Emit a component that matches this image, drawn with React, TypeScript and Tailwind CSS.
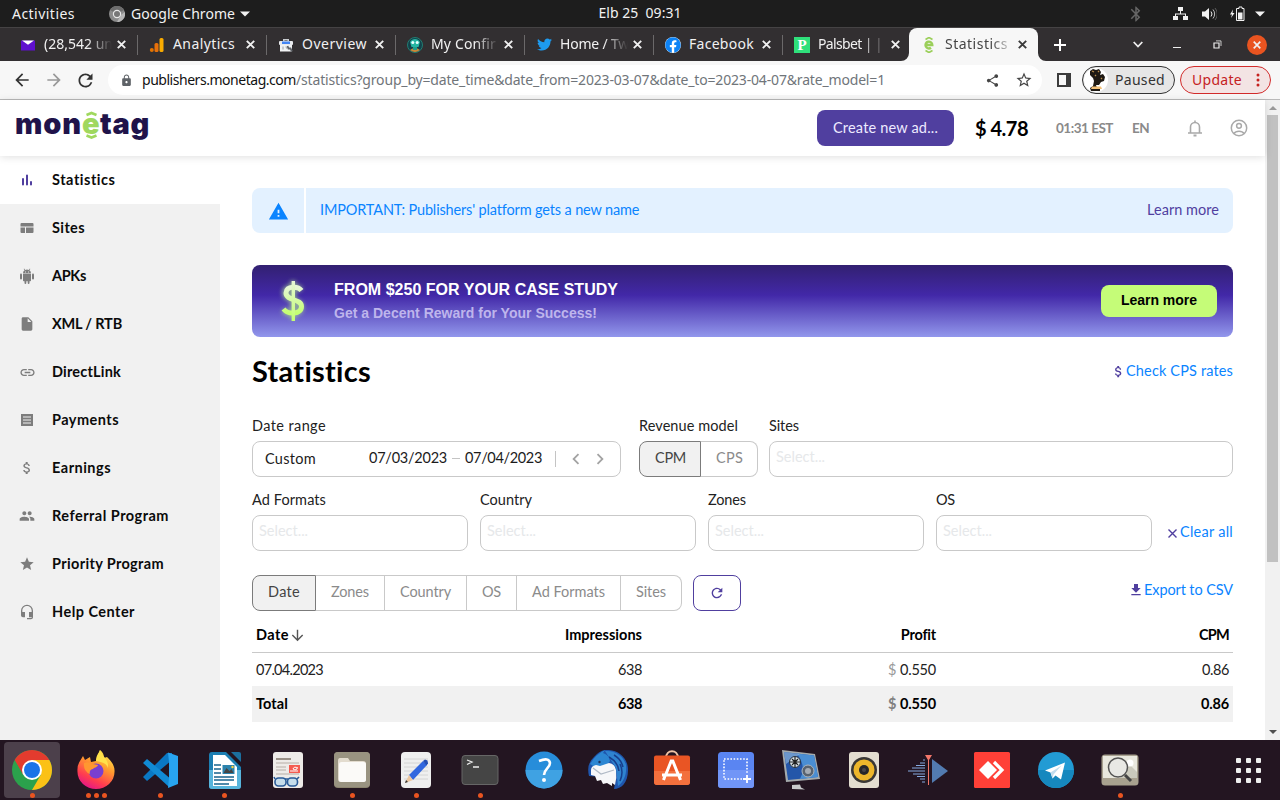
import { useLayoutEffect, useRef, type ReactNode } from "react";
import {
  MdArrowBack, MdArrowForward, MdRefresh, MdLock, MdShare, MdStarBorder, MdInsertDriveFile, MdLink,
  MdAttachMoney, MdPeople, MdStar, MdHeadsetMic, MdWarning, MdChevronLeft, MdChevronRight, MdBluetooth,
  MdArrowDownward, MdDownload,
} from "react-icons/md";
import { FaTwitter, FaFacebook } from "react-icons/fa";

const UI = "font-['Noto_Sans','Open_Sans',sans-serif]";
const BODY = "font-[Lato,'Open_Sans',sans-serif]";

/* Text run tracked so that it fills the given width. */
function T({ w, className = "", children }: { w: number; className?: string; children: string }) {
  const ref = useRef<HTMLSpanElement>(null);
  useLayoutEffect(() => {
    const el = ref.current;
    if (!el) return;
    el.style.letterSpacing = "0px";
    const natural = el.getBoundingClientRect().width;
    el.style.letterSpacing = `${(w - natural) / children.length}px`;
  }, [w, children]);
  return <span ref={ref} className={`inline-block shrink-0 whitespace-pre ${className}`}>{children}</span>;
}

function TopBar() {
  return (
    <div className={`grid h-7 shrink-0 grid-cols-3 items-center border-b border-[#454344] bg-[#1d1d1d] text-[14px] leading-5 text-[#f2f2f2] ${UI}`}>
      <div className="flex items-center pl-3">
        <T w={63}>Activities</T>
        <svg className="ml-[34px]" width="16" height="16" viewBox="0 0 16 16">
          <circle cx="8" cy="8" r="8" fill="#8b8b8b" />
          <path d="M8 8 1 4a8 8 0 0 1 14 0z" fill="#6d6d6d" />
          <path d="M8 16 12 9 15.8 6A8 8 0 0 1 8 16z" fill="#b5b5b5" />
          <circle cx="8" cy="8" r="4.2" fill="#e8e8e8" />
          <circle cx="8" cy="8" r="3" fill="#777" />
        </svg>
        <T w={104} className="ml-1.5">Google Chrome</T>
        <svg className="ml-[5px]" width="10" height="6" viewBox="0 0 10 6"><path d="M0 .5h10L5 5.5z" fill="#f2f2f2" /></svg>
      </div>
      <div className="flex justify-center pb-px"><T w={83}>{"Elb 25  09:31"}</T></div>
      <div className="flex items-center justify-end pr-[15px]">
        <MdBluetooth size={18} className="mr-[28px] text-[#666]" />
        <svg width="15" height="14" viewBox="0 0 15 14" fill="#f2f2f2"><path d="M5 0h5v4H8v2.500h5V9h2v4h-5V9h2V7.500H3V9h2v4H0V9h2V6.500h5V4H5z" /></svg>
        <svg className="ml-[14px]" width="15" height="14" viewBox="0 0 15 14" fill="none" stroke="#f2f2f2">
          <path d="M0 4.500h3L7 1v12L3 9.500H0z" fill="#f2f2f2" stroke="none" /><path d="M9 4.500a4 4 0 0 1 0 5" /><path d="M11 2.500a7 7 0 0 1 0 9" opacity=".75" /><path d="M13 1a9 9 0 0 1 0 12" opacity=".3" />
        </svg>
        <svg className="ml-[13px]" width="15" height="16" viewBox="0 0 15 16"><path d="M3 3.500 0 8.500h2L1 12l3.500-5H2.500z" fill="#f2f2f2" /><path d="M9 1h3v1.500h2v12H6.500v-12H9z" fill="none" stroke="#f2f2f2" /><path d="M8 6.500h4.500v7H8z" fill="#f2f2f2" /></svg>
        <svg className="ml-[10px]" width="10" height="6" viewBox="0 0 10 6"><path d="M0 .5h10L5 5.500z" fill="#f2f2f2" /></svg>
      </div>
    </div>
  );
}

function X({ color = "#f1f1f1", size = 9 }: { color?: string; size?: number }) {
  return <svg width={size} height={size} viewBox="0 0 9 9" stroke={color} strokeWidth="1.9"><path d="M.8.8 8.200 8.200M8.200.8.8 8.200" /></svg>;
}

const MonetagIcon = (
  <svg width="16" height="16" viewBox="0 0 16 16" fill="none" stroke="#9bcf5a">
    <path d="m4.500 2.500 3.500-2 3.500 2M4.500 13.500l3.500 2 3.500-2" strokeWidth="1.700" />
    <path d="M4.800 8h6.500a3.400 3.400 0 1 0-1.300 2.700" strokeWidth="2.400" />
  </svg>
);

const tabs: { icon: ReactNode; text: string; w: number; fade?: boolean }[] = [
  { icon: <svg width="16" height="16" viewBox="0 0 16 16"><path d="M1 3.500h14v10H1z" fill="#5f10cf" /><path d="M2 3.500h12L8 7.800z" fill="#fff" /></svg>, text: "(28,542 un", w: 69, fade: true },
  { icon: <svg width="16" height="16" viewBox="0 0 16 16"><rect x="10.500" y="1" width="4" height="14" rx="1.500" fill="#f9ab00" /><rect x="5.500" y="6" width="4" height="9" rx="1.500" fill="#e8710a" /><circle cx="2.800" cy="13" r="2" fill="#e37400" /></svg>, text: "Analytics", w: 62 },
  { icon: <svg width="16" height="16" viewBox="0 0 16 16"><path d="M5 2h6v3H9.500V3.500h-3V5H5z" fill="#c8ccd0" /><rect x="1" y="4" width="14" height="4" rx="1" fill="#e8eaed" /><rect x="4" y="4.500" width="8" height="2.500" fill="#4285f4" /><path d="M2 8h12v6.500H2z" fill="#f1f3f4" /><path d="M5 9.500v3M8 9.500l.5 2" stroke="#9aa0a6" /><path d="m9.500 9 1 2.500h2l1.500 3" stroke="#5f6368" strokeWidth="1.800" fill="none" /></svg>, text: "Overview", w: 65 },
  { icon: <svg width="16" height="16" viewBox="0 0 16 16"><circle cx="8" cy="8" r="7.500" fill="#12414a" stroke="#227d72" /><path d="M3 5c2-4 8-4 10 0l-1.500 5h-7z" fill="#25b5a2" /><circle cx="5.800" cy="5.500" r="1.500" fill="#e7ffff" /><circle cx="10.200" cy="5.500" r="1.500" fill="#e7ffff" /><path d="M3 13q5-4 10 0-5 4-10 0" fill="#c9893a" /><path d="M6 10h4v3H6z" fill="#1f9d8a" /></svg>, text: "My Confir", w: 65, fade: true },
  { icon: <FaTwitter size={15} color="#1d9bf0" />, text: "Home / Tw", w: 69, fade: true },
  { icon: <span className="flex size-4 rounded-full bg-white"><FaFacebook size={16} color="#0d83f5" /></span>, text: "Facebook", w: 65 },
  { icon: <span className="flex size-4 items-center justify-center bg-[#2fe07b] font-['Liberation_Serif',serif] text-[15px] leading-4 font-bold text-white">P</span>, text: "Palsbet | |", w: 64, fade: true },
];

function TabStrip() {
  return (
    <div className={`flex h-[33px] shrink-0 bg-[#322f31] pl-[9px] text-[14px] leading-5 text-[#f1f1f1] ${UI}`}>
      {tabs.map((t, i) => (
        <div key={t.text} className={`flex w-[129px] items-center pl-[11px] ${i < 6 ? "bg-[linear-gradient(#6b696a,#6b696a)] bg-[length:1px_20px] bg-[position:128px_center] bg-no-repeat" : ""}`}>
          <span className="flex w-4 justify-center">{t.icon}</span>
          <div className={`ml-2 w-[70px] pb-px ${t.fade ? "[mask-image:linear-gradient(to_right,#000_44px,transparent_68px)]" : ""}`}><T w={t.w} className="align-top">{t.text}</T></div>
          <span className="ml-[3px] flex"><X /></span>
        </div>
      ))}
      <div className="relative -ml-[3px] flex w-[129px] items-center rounded-t-lg bg-[#f7f7f7] pl-[12px] text-[#454545]">
        <svg className="absolute bottom-0 -left-2" width="8" height="8" viewBox="0 0 8 8"><path d="M8 0v8H0a8 8 0 0 0 8-8" fill="#f7f7f7" /></svg>
        <svg className="absolute -right-2 bottom-0" width="8" height="8" viewBox="0 0 8 8"><path d="M0 0v8h8A8 8 0 0 1 0 0" fill="#f7f7f7" /></svg>
        {MonetagIcon}
        <div className="ml-2 w-[66px] pb-px [mask-image:linear-gradient(to_right,#000_46px,transparent_70px)]"><T w={63} className="align-top">Statistics</T></div>
        <span className="ml-[7px] flex"><X color="#3a3a3a" /></span>
      </div>
      <div className="flex grow items-center pl-4">
        <svg width="12" height="12" viewBox="0 0 12 12" stroke="#fff" strokeWidth="2"><path d="M6 0v12M0 6h12" /></svg>
        <svg className="ml-[67px]" width="10" height="7" viewBox="0 0 10 7" fill="none" stroke="#eee" strokeWidth="1.800"><path d="m.7 1 4.300 4.500L9.300 1" /></svg>
        <svg className="ml-[30px]" width="8" height="8" viewBox="0 0 8 8"><path d="M0 6h8v1H0z" fill="#eee" /></svg>
        <svg className="ml-8" width="9" height="9" viewBox="0 0 9 9" fill="none" stroke="#eee"><path d="M1 3h5v5H1z" strokeWidth="1.200" /><path d="M3 .9h5V6" strokeWidth=".8" /></svg>
        <span className="ml-[25px] flex size-5 items-center justify-center rounded-full bg-[#e95420]"><X size={8} /></span>
      </div>
    </div>
  );
}

function Toolbar() {
  return (
    <div className={`flex h-[39px] shrink-0 items-center border-b border-[#b9b9b9] bg-[#f7f7f7] text-[14px] leading-5 ${UI}`}>
      <MdArrowBack size={20} className="ml-3 text-[#333]" />
      <MdArrowForward size={20} className="ml-3 text-[#999]" />
      <MdRefresh size={21} className="ml-[11px] text-[#333]" />
      <div className="ml-3 flex h-[30px] w-[934px] items-center rounded-full bg-white pl-3">
        <MdLock size={13} className="text-[#5f6368]" />
        <T w={154} className="ml-[9px] text-[#111]">publishers.monetag.com</T>
        <T w={589} className="text-[#70757a]">/statistics?group_by=date_time&date_from=2023-03-07&date_to=2023-04-07&rate_model=1</T>
        <MdShare size={15} className="ml-[100px] text-[#454545]" />
        <MdStarBorder size={18} className="ml-[15px] text-[#454545]" />
      </div>
      <svg className="ml-[15px]" width="14" height="14" viewBox="0 0 14 14"><path d="M1 1h12v12H1z" fill="none" stroke="#3c3c3c" strokeWidth="2" /><path d="M9 1h4v12H9z" fill="#3c3c3c" /></svg>
      <div className="ml-[11px] flex h-7 w-[93px] items-center rounded-full border border-[#333] bg-[#e6e6e6] text-[#333]">
        <svg className="ml-px" width="24" height="24" viewBox="0 0 24 24"><circle cx="12" cy="12" r="12" fill="#fff" /><path d="m6 3 3-2 3 1 3-1 2 3-1 3 3-1 2 3-1 4-3 1-2 3h-3l1 3h3v3H7l-1-3 3-2 1-5-1-3-3-3z" fill="#1f1a14" /><path d="m8 3 2 1M14 3l1 1M11 7l1 1M17 10l1 1" stroke="#b88c4d" strokeWidth="1.300" fill="none" /><path d="M8 18.500h9l1 2.500H7z" fill="#f2c077" /></svg>
        <T w={50} className="ml-[7px]">Paused</T>
      </div>
      <div className="ml-[5px] flex h-7 w-[91px] items-center rounded-full border border-[#d22b2b] bg-[#f3e4e4] pl-[11px] text-[#c5221f]">
        <T w={50}>Update</T>
        <svg className="ml-[14px]" width="4" height="14" viewBox="0 0 4 14" fill="#c5221f"><circle cx="2" cy="2" r="1.500" /><circle cx="2" cy="7" r="1.500" /><circle cx="2" cy="12" r="1.500" /></svg>
      </div>
    </div>
  );
}

function SiteHeader() {
  return (
    <header className="relative z-10 flex h-14 shrink-0 bg-white pl-[15px] shadow-[0_1px_8px_rgba(0,0,0,0.13)]">
      <div className="relative mt-[2px] flex h-11 w-[136px] items-center font-[Inter,sans-serif] text-[29px] leading-[44px] font-black text-[#20134a]">
        <T w={67}>mon</T><T w={18} className="text-[#9fd85e]">e</T><T w={50}>tag</T>
        <svg className="absolute top-[9px] left-[69px]" width="15" height="28" viewBox="0 0 15 28" fill="none" stroke="#9fd85e" strokeWidth="2.600"><path d="M2.500 4 7.500 2l5 2M2.500 24.500l5 2 5-2" /></svg>
      </div>
      <div className="mt-[10px] ml-[666px] flex h-9 w-[137px] justify-center rounded-lg bg-[#503f9f] pt-[8px] text-[14.5px] leading-5 text-[#eeebff]"><T w={105}>Create new ad...</T></div>
      <T w={53} className="mt-4 ml-[21px] text-[20px] leading-6 font-bold text-black">$ 4.78</T>
      <T w={57} className="mt-[18px] ml-[28px] text-[13.5px] leading-5 font-bold text-[#8a8a8a]">01:31 EST</T>
      <T w={17} className="mt-[18px] ml-[19px] text-[13.5px] leading-5 font-bold text-[#8a8a8a]">EN</T>
      <svg className="mt-5 ml-[39px]" width="14" height="17" viewBox="0 0 14 17" fill="none" stroke="#a9a9a9" strokeWidth="1.600"><path d="M0 13h14M2.500 13V7a4.500 4.500 0 0 1 9 0v6M7 2.500V.5" /><path d="M5.500 15.500h3" strokeWidth="2" /></svg>
      <svg className="mt-[19px] ml-[28px]" width="18" height="18" viewBox="0 0 18 18" fill="none" stroke="#a9a9a9" strokeWidth="1.500"><circle cx="9" cy="9" r="7.700" /><circle cx="9" cy="6.800" r="2.400" /><path d="M4 14.500c1.800-3 8.200-3 10 0" /></svg>
    </header>
  );
}

const nav: { icon: ReactNode; text: string; w: number }[] = [
  { icon: <svg width="12" height="12" viewBox="0 0 12 12" stroke="#503f9f" strokeWidth="2" strokeLinecap="round"><path d="M2 5v5.500M6 1.500v9M10 8v2.500" /></svg>, text: "Statistics", w: 64 },
  { icon: <svg width="14" height="12" viewBox="0 0 14 12" fill="#7d7d7d"><path d="M1.500 1h11q1 0 1 1v2.500H.5V2q0-1 1-1M.5 5.500H5V11H1.500q-1 0-1-1zM6 5.500h7.500V10q0 1-1 1H6z" /></svg>, text: "Sites", w: 33 },
  { icon: <svg width="14" height="16" viewBox="0 0 14 16" fill="#7d7d7d"><path d="M3 6h8v6.500q0 .8-.8.800H9.500V15a.9.9 0 0 1-1.800 0v-1.700H6.300V15a.9.9 0 0 1-1.800 0v-1.700h-.7q-.8 0-.8-.8zM3 5.400A4 3.700 0 0 1 4.600 2.300L3.700 1l.4-.4 1.200 1.300a4.500 4.500 0 0 1 3.400 0L9.900.6l.4.4-.9 1.300A4 3.700 0 0 1 11 5.400z" /><rect y="5.600" width="2" height="6" rx="1" /><rect x="12" y="5.600" width="2" height="6" rx="1" /><path d="M5 3.600h.9v.8H5zM8.100 3.600H9v.8h-.9z" fill="#f1f1f1" /></svg>, text: "APKs", w: 34 },
  { icon: <MdInsertDriveFile size={16} />, text: "XML / RTB", w: 70 },
  { icon: <MdLink size={17} />, text: "DirectLink", w: 69 },
  { icon: <svg width="12" height="12" viewBox="0 0 12 12"><path d="M0 0h12v12H0z" fill="#7d7d7d" /><path d="M2 3h8M2 6h8M2 9h8" stroke="#f1f1f1" /></svg>, text: "Payments", w: 67 },
  { icon: <MdAttachMoney size={16} />, text: "Earnings", w: 59 },
  { icon: <MdPeople size={16} />, text: "Referral Program", w: 117 },
  { icon: <MdStar size={16} />, text: "Priority Program", w: 112 },
  { icon: <MdHeadsetMic size={16} />, text: "Help Center", w: 83 },
];

function Sidebar() {
  return (
    <nav className="w-[220px] shrink-0 bg-[#f1f1f1]">
      {nav.map((n, i) => (
        <div key={n.text} className={`flex h-12 items-center text-[14.5px] leading-5 font-bold text-[#0b0b0b] ${i === 0 ? "bg-white" : ""}`}>
          <span className="flex w-[54px] justify-center text-[#7d7d7d]">{n.icon}</span>
          <T w={n.w} className="-ml-0.5">{n.text}</T>
        </div>
      ))}
    </nav>
  );
}

function Field({ label, lw, className = "" }: { label: string; lw: number; className?: string }) {
  return (
    <div className={className}>
      <div className="h-[26px] pt-px"><T w={lw} className="text-[#222]">{label}</T></div>
      <div className="h-9 rounded-lg border border-[#c9c9c9] pt-[5px] pl-[6px] text-[#e6e8ea]"><T w={49}>Select...</T></div>
    </div>
  );
}

const groups: [string, number, string][] = [
  ["Zones", 38, "w-[69px]"], ["Country", 51, "w-[82px]"], ["OS", 19, "w-[50px]"], ["Ad Formats", 73, "w-[104px]"], ["Sites", 30, "w-[61px] rounded-r-lg"],
];

function Main() {
  return (
    <main className="w-[1045px] pt-8 pr-8 pl-8 text-[14.5px] leading-5">
      <div className="flex h-[45px] overflow-hidden rounded-lg bg-[#e3f1ff]">
        <div className="flex w-[54px] items-center justify-center border-r-2 border-white pt-0.5"><MdWarning size={21} className="text-[#0a84ff]" /></div>
        <div className="flex grow justify-between pt-[12px] pr-[14px] pl-[14px]">
          <T w={319} className="text-[#0a84ff]">IMPORTANT: Publishers' platform gets a new name</T>
          <T w={72} className="text-[#503f9f]">Learn more</T>
        </div>
      </div>
      <div className="mt-8 flex h-[72px] rounded-lg bg-[linear-gradient(#322071_0%,#4228a8_42%,#9297ec_100%)] font-['Liberation_Sans',Arial,sans-serif]">
        <svg className="mt-3 ml-6" width="34" height="50" viewBox="0 0 34 50">
          <defs><linearGradient id="cash" x1="0" y1="0" x2="0" y2="1"><stop offset="0" stopColor="#e6f7d5" /><stop offset="1" stopColor="#c4ff72" /></linearGradient></defs>
          <g className="blur-[2px]" fill="none" stroke="#a4cf91" strokeWidth="6" opacity=".8"><path d="M25 13C21 9 9 9 9 16s16 7 16 14-11 9-18 3M17 4v38" /></g>
          <path d="M25.500 13.500C22 9 10 8.500 10 16c0 8 15.500 5.500 15.500 13.500 0 8-13 8.500-18 2.500" fill="none" stroke="url(#cash)" strokeWidth="5" />
          <path d="M15.600 4h3.400v40h-3.400z" fill="url(#cash)" />
        </svg>
        <div className="ml-6 pt-[15px] font-bold">
          <div className="h-5"><T w={284} className="text-base leading-5 text-white">FROM $250 FOR YOUR CASE STUDY</T></div>
          <div className="mt-[3px]"><T w={263} className="text-[14px] leading-5 text-[#beb5ec]">Get a Decent Reward for Your Success!</T></div>
        </div>
        <div className="mt-5 mr-4 ml-auto flex h-8 w-[116px] justify-center rounded-lg bg-[#c5fc78] pt-[5px] text-[14px] font-bold text-black"><T w={76}>Learn more</T></div>
      </div>
      <div className="flex h-[78px] justify-between pt-[16px]">
        <T w={120} className="text-[29px] leading-9 font-bold text-black">Statistics</T>
        <div className="flex pt-2 text-[#0a84ff]"><MdAttachMoney size={15} className="mt-[3px] text-[#503f9f]" /><T w={107}>Check CPS rates</T></div>
      </div>
      <div className="flex">
        <div className="w-[369px]">
          <div className="h-[26px] pt-px"><T w={74} className="text-[#222]">Date range</T></div>
          <div className="flex h-9 items-center rounded-lg border border-[#c9c9c9] pl-3 text-[#1b1b1b]">
            <T w={51} className="pb-px">Custom</T>
            <T w={78} className="ml-[53px] pb-[3px]">07/03/2023</T>
            <span className="mx-[5px] mb-0.5 h-px w-2 bg-[#c4c4c4]" />
            <T w={77} className="pb-[3px]">07/04/2023</T>
            <span className="ml-[13px] h-4 w-px bg-[#c4c4c4]" />
            <MdChevronLeft size={22} className="ml-[9px] text-[#a3a3a3]" />
            <MdChevronRight size={22} className="ml-[2px] text-[#a3a3a3]" />
          </div>
        </div>
        <div className="ml-[18px] w-[119px]">
          <div className="h-[26px] pt-px"><T w={99} className="text-[#222]">Revenue model</T></div>
          <div className="flex h-9">
            <div className="w-[62px] rounded-l-lg border border-[#7b7b7b] bg-[#f1f1f1] pt-[6px] pl-[15px] text-[#444]"><T w={31}>CPM</T></div>
            <div className="w-[57px] rounded-r-lg border border-l-0 border-[#c9c9c9] pt-[6px] pl-[15px] text-[#8b8b8b]"><T w={27}>CPS</T></div>
          </div>
        </div>
        <Field label="Sites" lw={30} className="ml-[11px] grow" />
      </div>
      <div className="mt-3 flex gap-3">
        <Field label="Ad Formats" lw={74} className="w-[216px]" />
        <Field label="Country" lw={52} className="w-[216px]" />
        <Field label="Zones" lw={38} className="w-[216px]" />
        <Field label="OS" lw={19} className="w-[216px]" />
        <div className="flex grow justify-end pt-[33px] text-[#0a84ff]">
          <svg className="mt-[7px] mr-[3px]" width="9" height="9" viewBox="0 0 9 9" stroke="#503f9f" strokeWidth="1.400"><path d="m.5.5 8 8M8.500.5l-8 8" /></svg><T w={53}>Clear all</T>
        </div>
      </div>
      <div className="mt-6 flex h-9 text-[#8b8b8b]">
        <div className="w-16 rounded-l-lg border border-[#7b7b7b] bg-[#f1f1f1] pt-[6px] pl-[15px] text-[#444]"><T w={32}>Date</T></div>
        {groups.map(([t, w, c]) => <div key={t} className={`border border-l-0 border-[#c9c9c9] pt-[6px] pl-[15px] ${c}`}><T w={w}>{t}</T></div>)}
        <div className="ml-[11px] flex w-12 items-center justify-center rounded-lg border border-[#503f9f]"><MdRefresh size={16} className="text-[#503f9f]" /></div>
        <div className="ml-auto flex pt-[5px] text-[#0a84ff]"><MdDownload size={16} className="mt-[2px] text-[#503f9f]" /><T w={89}>Export to CSV</T></div>
      </div>
      <div className="grid h-[42px] grid-cols-[390px_294px_297px] items-center border-b border-[#c9c9c9] pt-[7px] text-black">
        <div className="flex items-center justify-between pl-1 font-bold"><span className="flex items-center"><T w={33}>Date</T><MdArrowDownward size={17} className="text-[#555]" /></span><T w={77}>Impressions</T></div>
        <div className="text-right font-bold"><T w={35}>Profit</T></div>
        <div className="pr-1 text-right font-bold"><T w={30}>CPM</T></div>
      </div>
      <div className="grid h-[33px] grid-cols-[390px_294px_297px] items-center text-[#222]">
        <div className="flex justify-between pl-1"><T w={67}>07.04.2023</T><T w={24}>638</T></div>
        <div className="text-right"><T w={12} className="text-[#999]">$ </T><T w={36}>0.550</T></div>
        <div className="pr-1 text-right"><T w={27}>0.86</T></div>
      </div>
      <div className="grid h-9 grid-cols-[390px_294px_297px] items-center bg-[#f1f1f1] pb-px font-bold text-black">
        <div className="flex justify-between pl-1"><T w={32}>Total</T><T w={24}>638</T></div>
        <div className="text-right"><T w={12} className="text-[#808080]">$ </T><T w={36}>0.550</T></div>
        <div className="pr-1 text-right"><T w={28}>0.86</T></div>
      </div>
    </main>
  );
}

function Scrollbar() {
  return (
    <div className="flex w-[15px] shrink-0 flex-col items-center bg-[#f1f1f1]">
      <svg className="mt-1.5" width="8" height="4" viewBox="0 0 8 4"><path d="M0 4h8L4 0z" fill="#9a9a9a" /></svg>
      <div className="mt-[5px] h-[447px] w-[11px] bg-[#c1c1c1]" />
      <svg className="mt-auto mb-1.5" width="8" height="4" viewBox="0 0 8 4"><path d="M0 0h8L4 4z" fill="#505050" /></svg>
    </div>
  );
}

const dock: { dots: number; art: ReactNode }[] = [
  { dots: 1, art: <><circle cx="20" cy="20" r="20" fill="#2ba24c" /><path d="M2.700 10A20 20 0 0 1 37.300 10H20L11.300 25z" fill="#e33b2e" /><path d="M20 10h17.300A20 20 0 0 1 20 40l8.700-15z" fill="#fbc116" /><circle cx="20" cy="20" r="10" fill="#fff" /><circle cx="20" cy="20" r="8" fill="#1a73e8" /></> },
  { dots: 3, art: <><defs><linearGradient id="fire" x1=".8" y1="0" x2=".3" y2="1"><stop offset="0" stopColor="#fff44f" /><stop offset=".4" stopColor="#ff9a2e" /><stop offset=".75" stopColor="#ff3d4f" /><stop offset="1" stopColor="#e3158a" /></linearGradient></defs><path d="M4 11 7 6l2 4 5-3 1 5 5-1 4-11c3 2 4 5 4 8l3-1c5 5 8 9 7.500 15A18.500 17 0 0 1 1.500 22Q1 15 4 11" fill="url(#fire)" /><circle cx="20" cy="21" r="7.500" fill="#7a3fd0" /><path d="M8 13c4-2 7 0 9 1l5 1c-1 3-4 2-5 4-2 0-4 2-3 5q-7-3-6-11" fill="#ff9730" /><path d="M24 0c1 6 9 8 8 18-1-4-5-6-12-7 0-6 3-8 4-11" fill="#ffe14a" /></> },
  { dots: 1, art: <><path d="m3 27 4 4L32 10V3l-5 0z" fill="#0a78c4" /><path d="m3 13 4-4L32 30l-3 7z" fill="#118ad4" /><path d="M28 2.500 38 6v28l-10 4 1-10V12z" fill="#28a4f0" /></> },
  { dots: 1, art: <><path d="M8 2h14l15 15v19a3 3 0 0 1-3 3H8a3 3 0 0 1-3-3V5a3 3 0 0 1 3-3" fill="#1c7eb2" /><path d="M5 20h32v16a3 3 0 0 1-3 3H8a3 3 0 0 1-3-3z" fill="#58b5dc" /><path d="M9 5h12l12 12v19H9z" fill="#fff" /><path d="M27 2h8q2 0 2 2v8z" fill="#1c6f9e" /><path d="M10 15h7M10 19h7M10 23h7M10 27h20M10 30h20M10 34h15" stroke="#17648e" strokeWidth="1.400" /><path d="M18.500 15h12v9h-12z" fill="#2c83ad" /><path d="m19.500 23 3-5 3 3 2-2 2 4z" fill="#444" /><circle cx="28.500" cy="17" r="1.200" fill="#ffd338" /></> },
  { dots: 0, art: <><rect x="5" y="2" width="30" height="36" rx="3" fill="#eeebe8" /><path d="M8 9h15" stroke="#8c8277" strokeWidth="1.700" /><path d="M8 13h23M8 17h10M8 20h10M8 24h23" stroke="#b6aea6" strokeWidth="1.200" /><path d="M21 15h11v8H21z" fill="#f55b50" /><path d="M30 18q-4-2-5 1 4 2 4-1M22 21h8" stroke="#fff" fill="none" /><g fill="#c6ddeb" stroke="#2a5b98" strokeWidth="1.600"><rect x="7" y="28" width="11" height="8" rx="3.500" /><rect x="19.500" y="28" width="10" height="8" rx="3.500" /><path d="M17 29h3M7 29l-1-2M29 29l2-2" /></g></> },
  { dots: 1, art: <><rect x="2" y="2" width="36" height="36" rx="4" fill="#8b846f" /><rect x="2" y="2" width="36" height="35" rx="4" fill="#999381" /><path d="M8 8h8l2 3h13q3 0 3 3v15q0 3-3 3H9q-3 0-3-3V11q0-3 2-3" fill="#e3dccf" /><rect x="7" y="12" width="27" height="20" rx="2.500" fill="#fbfaf8" /></> },
  { dots: 1, art: <><rect x="5" y="2" width="30" height="36" rx="4" fill="#efefef" /><path d="M8 9h24M8 13h24M8 17h24M8 21h24M8 25h24M8 29h24" stroke="#d4d4d4" /><path d="m13 25 14-14 4 4-14 15z" fill="#3267df" /><path d="m27 11 2-1.500 2.500 1 .5 3-1.500 2z" fill="#244fb4" /><path d="m13 25-4 8 8-3z" fill="#edc7a0" /><path d="m9 33 1-3 2 2z" fill="#333" /></> },
  { dots: 1, art: <><rect x="2" y="5.500" width="36" height="29" rx="3" fill="#454545" stroke="#666" /><path d="m7 10 5 2-5 2.500M13 17h6" stroke="#eee" fill="none" strokeWidth="1.300" /></> },
  { dots: 0, art: <><circle cx="20" cy="20" r="18.500" fill="#278dda" /><path d="M1.500 20a18.500 18.500 0 0 0 37 0z" fill="#3fa2e3" /><path d="M15 11q10-4 11 2c0 5-6 6-6 12" stroke="#fff" fill="none" strokeWidth="2.600" /><circle cx="20" cy="30" r="2" fill="#fff" /></> },
  { dots: 0, art: <><path d="M17 0C29-1 40 7 40 20S33 39 26 39l2-11L1 26Q-2 14 6 7 11 1 17 0" fill="#1f56ad" /><path d="M17 1c11-1 19 6 21 14 1 9-2 17-8 21l-2-18z" fill="#2f83cf" /><path d="M26 5q7 4 9 12M21 7q9 5 10 14M32 14q4 8 0 17" stroke="#173e8c" strokeWidth="1.500" fill="none" /><path d="M2 14Q8 4 17 0l-2 3q6 2 7 8l-4 5-8 3z" fill="#2c86d2" /><circle cx="11.500" cy="12" r="1.200" fill="#1c335c" /><path d="M3 20q0-4 5-5l4 1 9-3q6 1 7 7 1 8-1 15l-3-2v3l-5-3-4 1-2-4-4 1-2-5-4-1z" fill="#f6f7f9" /><path d="m5 18 8 6 13-4" fill="none" stroke="#b0bac6" strokeWidth="1.200" /></> },
  { dots: 0, art: <><path d="M14 8c0-9 12-9 12 0" fill="none" stroke="#f1c4a6" strokeWidth="2" /><path d="M4 5.500h32q2 0 2 2V32q0 3-3 3H5q-3 0-3-3V7.500q0-2 2-2" fill="#e95524" /><path d="M2 21h36v11q0 3-3 3H5q-3 0-3-3z" fill="#f3703d" /><path d="m14 24 5.200-13h1.600L26 24M10 25h20M13 26l-1.500 4M27 26l1.500 4" stroke="#fff" strokeWidth="3" fill="none" /></> },
  { dots: 0, art: <><rect x="2" y="2" width="36" height="36" rx="3.500" fill="#5a85f2" /><path d="M2 20h36v15a3 3 0 0 1-3 3H5a3 3 0 0 1-3-3z" fill="#7195f7" /><path d="M8 9h23v20H8z" fill="none" stroke="#fff" strokeWidth="1.600" strokeDasharray="1.600 1.600" /><path d="M26 24h10v10H26z" fill="#7195f7" /><path d="M31 25v8M27 29h8" stroke="#fff" strokeWidth="1.800" /></> },
  { dots: 0, art: <><path d="m2 0 33 4 5 25-34 3z" fill="#a4aaac" /><path d="m4 2 30 3.500 4 21.500-30 3z" fill="#2456a9" /><path d="m17 3.500 17 2L38 27l-18 2q7-12-3-25.500" fill="#4a8ed3" /><path d="m4 2 16 2-14 10z" fill="#8bb4dc" opacity=".7" /><circle cx="15" cy="12" r="5.500" fill="#dce5ec" stroke="#27313b" strokeWidth="1" /><path d="M15 7v10M10 12h10M12 9l6 6M18 9l-6 6" stroke="#222" strokeWidth="1.200" /><circle cx="28" cy="21" r="6" fill="#59636f" stroke="#aeb5bd" /><circle cx="28" cy="21" r="3" fill="#a5acb5" /><path d="m12 35 8-.5 1 3 4 2-13-.5z" fill="#c9cbcc" /></> },
  { dots: 0, art: <><rect x="5" y="2" width="30" height="36" rx="3" fill="#e3ddd0" /><circle cx="20" cy="20" r="13" fill="#393735" /><circle cx="20" cy="20" r="10.500" fill="#edb62b" /><circle cx="20" cy="20" r="5" fill="#272629" /><circle cx="20" cy="20" r="2" fill="#48464a" /></> },
  { dots: 0, art: <><path d="M15 10h2M12 13h5M8 15.500h9M4 18h13M0 21h17M5 24h12M9 26.500h8M12 29h5M14 32h3" stroke="#85a9df" strokeWidth="1.200" /><path d="M24 9v24l16-12z" fill="#527bb0" /><path d="M17 5h7l-3 5v25h-1V10z" fill="#f3776a" /></> },
  { dots: 0, art: <><rect x="2" y="2" width="36" height="36" rx="1.500" fill="#ff4037" /><path d="m16 11 9 9-9 9-9-9z" fill="#fff" /><path d="m22 12 8 8-8 8" fill="none" stroke="#fff" strokeWidth="3.200" /></> },
  { dots: 0, art: <><circle cx="20" cy="20" r="18" fill="#229bd4" /><path d="M2 20a18 18 0 0 0 36 0z" fill="#1688be" /><path d="M9 20.500 29 12.500l-4 17-5.500-4-3 3-2-6z" fill="#fff" /><path d="m14.500 22.500 11-7-8 9-1 4z" fill="#c1dced" /></> },
  { dots: 1, art: <><rect x="1.500" y="4.500" width="37" height="31" rx="3.500" fill="#a8a18f" /><path d="M3 6h34v22H3z" fill="#e9e8de" /><path d="m20 28 10-13 7 7v6z" fill="#cbcabd" /><circle cx="30" cy="13" r="3.500" fill="#fff" /><circle cx="18" cy="17.500" r="9.500" fill="#e8e8e4" stroke="#535353" strokeWidth="1.500" /><path d="m25 25 6 6" stroke="#444" strokeWidth="3" /></> },
];

function Dock() {
  return (
    <div className="flex h-[60px] shrink-0 bg-[#231521]">
      {dock.map((d, i) => (
        <div key={i} className="flex w-16 flex-col items-center pt-0.5">
          <div className={`flex h-14 w-14 flex-col items-center rounded pt-2 ${i === 0 ? "bg-[#4c404b]" : ""}`}>
            <svg width="40" height="40" viewBox="0 0 40 40">{d.art}</svg>
            <div className="mt-[3px] flex gap-[3px]">{Array.from({ length: d.dots }, (_, k) => <span key={k} className="size-[5px] rounded-full bg-[#e95420]" />)}</div>
          </div>
        </div>
      ))}
      <div className="mr-[19px] ml-auto grid grid-cols-3 gap-[5px] self-center">
        {Array.from({ length: 9 }, (_, k) => <span key={k} className="size-[5px] rounded-[1px] bg-[#eee]" />)}
      </div>
    </div>
  );
}

export default function App() {
  return (
    <div className="flex h-[800px] w-[1280px] flex-col overflow-hidden bg-white">
      <TopBar />
      <TabStrip />
      <Toolbar />
      <div className={`flex h-[640px] shrink-0 ${BODY}`}>
        <div className="flex w-[1265px] flex-col">
          <SiteHeader />
          <div className="flex grow"><Sidebar /><Main /></div>
        </div>
        <Scrollbar />
      </div>
      <Dock />
    </div>
  );
}
